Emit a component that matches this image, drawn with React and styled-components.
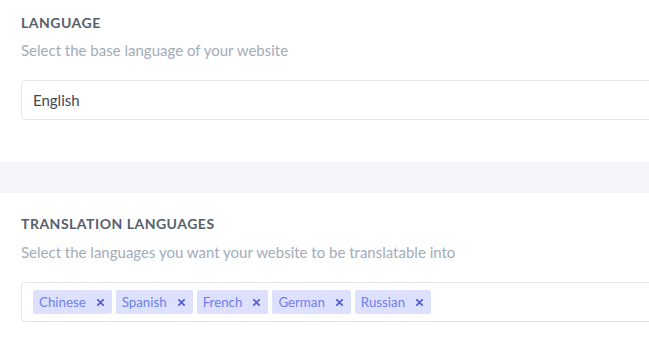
import React from "react";
import styled, { createGlobalStyle } from "styled-components";

const GlobalStyle = createGlobalStyle`
  * { box-sizing: border-box; }
  body {
    margin: 0;
    background: #ffffff;
    font-family: "Lato", "Open Sans", sans-serif;
  }
`;

const Page = styled.div`
  width: 100%;
  overflow: hidden;
`;

const Section = styled.section`
  padding: ${(p) => p.$pad};
`;

const Title = styled.h3`
  margin: 0;
  font-size: 14px;
  line-height: 20px;
  font-weight: 700;
  letter-spacing: 0.5px;
  color: #565f6c;
  text-transform: uppercase;
`;

const Hint = styled.p`
  margin: ${(p) => p.$gap}px 0 20px;
  font-size: 15px;
  line-height: 20px;
  color: #a3acb9;
`;

const Field = styled.div`
  width: calc(100% + 30px);
  height: 40px;
  border: 1px solid #e1e4ea;
  border-radius: 4px;
  display: flex;
  align-items: center;
  padding: 0 11px;
  gap: 4px;
  font-size: 15px;
  color: #3f4856;
`;

const Band = styled.div`
  height: 31px;
  background: #f5f6f9;
  border-top: 1px solid #f0f1f5;
`;

const Tag = styled.span`
  display: inline-flex;
  align-items: center;
  height: 24px;
  padding: 0 8px 0 6px;
  border-radius: 2px;
  background: #dde1fd;
  color: #6e7ff0;
  font-size: 13.3px;
`;

const Remove = styled.span`
  margin-left: 11px;
  display: inline-flex;
  color: #4e5fe6;
`;

function Cross() {
  return (
    <svg width="7" height="7" viewBox="0 0 8 8">
      <path d="M1 1 L7 7 M7 1 L1 7" stroke="currentColor" strokeWidth="2" strokeLinecap="round" />
    </svg>
  );
}

const languages = ["Chinese", "Spanish", "French", "German", "Russian"];

export default function App() {
  return (
    <Page>
      <GlobalStyle />
      <Section $pad="13px 0 42px 21px">
        <Title>Language</Title>
        <Hint $gap={7}>Select the base language of your website</Hint>
        <Field>English</Field>
      </Section>
      <Band />
      <Section $pad="21px 0 30px 21px">
        <Title>Translation languages</Title>
        <Hint $gap={8}>Select the languages you want your website to be translatable into</Hint>
        <Field>
          {languages.map((l) => (
            <Tag key={l}>
              {l}
              <Remove>
                <Cross />
              </Remove>
            </Tag>
          ))}
        </Field>
      </Section>
    </Page>
  );
}
